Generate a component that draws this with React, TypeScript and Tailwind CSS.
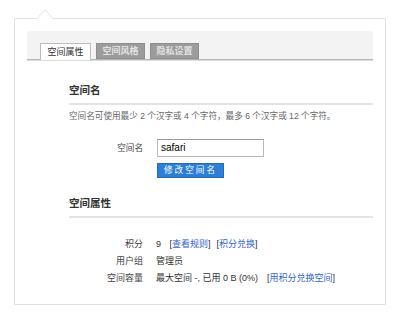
import { FC } from 'react'

const FONT = { fontFamily: '"Liberation Sans", "Noto Sans CJK SC", sans-serif' }

const TABS = ['空间属性', '空间风格', '隐私设置']

const InfoRow: FC<{ label: string; children: React.ReactNode }> = ({ label, children }) => (
  <div className="flex items-center h-[17px]">
    <div className="w-[74px] text-right text-[#444]">{label}</div>
    <div className="ml-[13px] text-[#333] whitespace-nowrap">{children}</div>
  </div>
)

const Link: FC<{ text: string }> = ({ text }) => (
  <span className="text-[#333]">
    [<span className="text-[#3366cc]">{text}</span>]
  </span>
)

const App: FC = () => {
  return (
    <div className="w-[400px] h-[321px] overflow-hidden bg-white text-[8.6px] leading-none" style={FONT}>
      <div className="relative ml-[14px] mt-[18px] w-[372px] h-[287px] border border-[#e1e1e1] px-[12px] pt-[12px]">
        <svg className="absolute left-[21px] top-[-10px]" width="20" height="11" viewBox="0 0 20 11">
          <path d="M0 10.5 L9 1 L18 10.5" fill="white" stroke="#e1e1e1" strokeWidth="1" />
        </svg>

        <div className="h-[29px] bg-[#f3f3f3] border-b border-[#b4b4b4] shadow-[0_1px_0_#dcdcdc] flex items-end pl-[13px] gap-[5px] text-[9px]">
          {TABS.map((tab, i) =>
            i === 0 ? (
              <div
                key={tab}
                className="w-[51px] h-[17px] -mb-px bg-white border border-b-0 border-[#bdbdbd] flex items-center justify-center text-[#333]">
                {tab}
              </div>
            ) : (
              <div
                key={tab}
                className="w-[49px] h-[16px] bg-[#9c9c9c] border border-[#8e8e8e] flex items-center justify-center text-[#e2e2e2] font-bold">
                {tab}
              </div>
            ),
          )}
        </div>

        <div className="pl-[42px] mt-[25px]">
          <h3 className="text-[10.5px] font-bold text-[#333]">空间名</h3>
          <div className="mt-[7px] h-[2px] bg-[#e3e3e3]" />
          <p className="mt-[7px] text-[#666]">空间名可使用最少 2 个汉字或 4 个字符，最多 6 个汉字或 12 个字符。</p>

          <div className="flex items-center mt-[19px]">
            <div className="w-[74px] text-right text-[#444]">空间名</div>
            <div className="ml-[14px] w-[107px] h-[18px] border border-[#bbb] border-t-[#999] flex items-center pl-[3px] text-[10px] text-black">
              safari
            </div>
          </div>
          <div className="ml-[88px] mt-[6px] w-[67px] h-[15px] bg-[#2d7fd5] border border-[#1f6bbf] flex items-center justify-center text-white tracking-[2px]">
            修改空间名
          </div>

          <h3 className="mt-[20px] text-[10.5px] font-bold text-[#333]">空间属性</h3>
          <div className="mt-[7px] h-[2px] bg-[#e3e3e3]" />

          <div className="mt-[18px] flex flex-col text-[9px]">
            <InfoRow label="积分">
              9 <span className="ml-[6px]"><Link text="查看规则" /></span>
              <span className="ml-[6px]"><Link text="积分兑换" /></span>
            </InfoRow>
            <InfoRow label="用户组">管理员</InfoRow>
            <InfoRow label="空间容量">
              最大空间 -, 已用 0 B (0%)
              <span className="ml-[9px]"><Link text="用积分兑换空间" /></span>
            </InfoRow>
          </div>
        </div>
      </div>
    </div>
  )
}

export default App
